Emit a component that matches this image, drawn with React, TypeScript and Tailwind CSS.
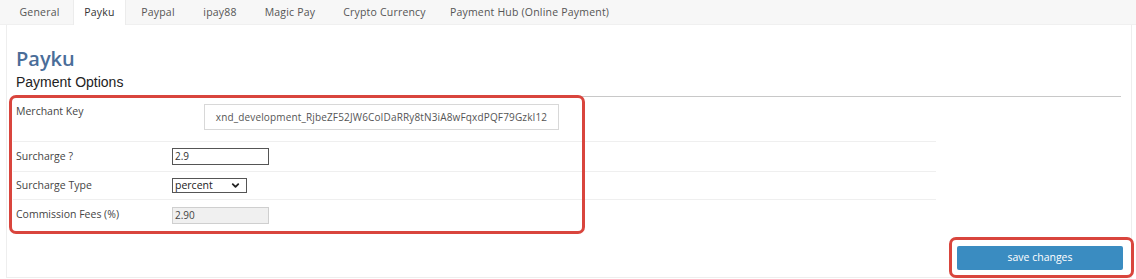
import { ChevronDown } from 'lucide-react';

const tabs = [
  { name: 'General', w: 'w-[67px]' },
  { name: 'Payku', w: 'w-[53px]' },
  { name: 'Paypal', w: 'w-[64px]' },
  { name: 'ipay88', w: 'w-[60px]' },
  { name: 'Magic Pay', w: 'w-[80px]' },
  { name: 'Crypto Currency', w: 'w-[109px]' },
  { name: 'Payment Hub (Online Payment)', w: 'w-[181px]' },
];

export default function App() {
  return (
    <div className="w-[1136px] h-[279px] bg-white overflow-hidden font-['Open_Sans',sans-serif] text-[#444]">
      {/* Tabs */}
      <div className="h-[25px] bg-[#f7f7f7] flex pl-[6px] border-b border-[#f0f0f0]">
        {tabs.map((t) => (
          <div
            key={t.name}
            className={`${t.w} h-[26px] flex items-center justify-center text-[10.5px] tracking-[0.2px] ${
              t.name === 'Payku' ? 'bg-white border-x border-[#ececec] text-[#333]' : 'text-[#555]'
            }`}
          >
            {t.name}
          </div>
        ))}
      </div>

      {/* Panel */}
      <div className="relative ml-[6px] mr-[4px] h-[253px] border-x border-b border-[#eee] bg-white pl-[9px] pr-[8px]">
        <h2 className="pt-[22px] text-[20px] leading-[24px] font-semibold text-[#4a6d99]">Payku</h2>
        <h3 className="mt-[1px] text-[14px] leading-[20px] text-[#222] font-['Liberation_Sans',sans-serif]">Payment Options</h3>
        <div className="mt-[4px] h-px bg-[#c8c8c8] mr-[2px]" />

        {/* Form rows */}
        <div className="w-[923px] ml-[-3px] text-[10.5px] text-[#444]">
          <div className="h-[45px] flex border-b border-[#efefef]">
            <div className="w-[159px] pl-[3px] pt-[7px]">Merchant Key</div>
            <div className="pl-[32px] pt-[7px]">
              <div className="w-[355px] h-[26px] border border-[#d8d8d8] flex items-center justify-center text-[10px] text-[#555] tracking-[0.15px]">
                xnd_development_RjbeZF52JW6CoIDaRRy8tN3iA8wFqxdPQF79GzkI12
              </div>
            </div>
          </div>
          <div className="h-[30px] flex items-center border-b border-[#efefef]">
            <div className="w-[159px] pl-[3px]">Surcharge ?</div>
            <div className="w-[97px] h-[17px] border border-[#555] flex items-center pl-[2px] text-[10px] text-[#333]">2.9</div>
          </div>
          <div className="h-[28px] flex items-center border-b border-[#efefef]">
            <div className="w-[159px] pl-[3px]">Surcharge Type</div>
            <div className="w-[75px] h-[15px] border border-[#555] flex items-center justify-between pl-[2px] pr-[5px] text-[10.5px] text-[#222]">
              percent
              <ChevronDown className="w-[11px] h-[11px]" strokeWidth={4} />
            </div>
          </div>
          <div className="h-[30px] flex items-center">
            <div className="w-[159px] pl-[3px]">Commission Fees (%)</div>
            <div className="w-[97px] h-[17px] border border-[#cfcfcf] bg-[#f0f0f0] flex items-center pl-[2px] text-[10px] text-[#444]">2.90</div>
          </div>
        </div>

        <div className="flex justify-end mt-[16px]">
          <button className="w-[166px] h-[24px] bg-[#3a8cc1] text-white text-[10.5px] font-medium rounded-[2px]">
            save changes
          </button>
        </div>

        {/* Annotation boxes */}
        <div className="absolute left-[2px] top-[70px] w-[576px] h-[139px] border-[3px] border-[#d9453d] rounded-[7px]" />
        <div className="absolute left-[942px] top-[212px] w-[185px] h-[41px] border-[3px] border-[#d9453d] rounded-[7px]" />
      </div>
    </div>
  );
}
